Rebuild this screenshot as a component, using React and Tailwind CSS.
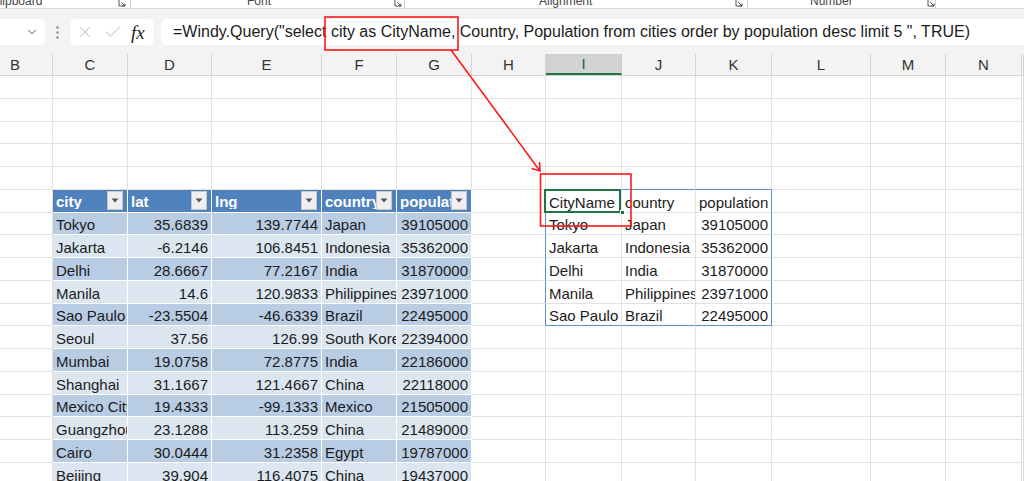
import { X, Check, ChevronDown } from "lucide-react";

const letters = ["B", "C", "D", "E", "F", "G", "H", "I", "J", "K", "L", "M", "N", ""];

const cities = [
  ["Tokyo", "35.6839", "139.7744", "Japan", "39105000"],
  ["Jakarta", "-6.2146", "106.8451", "Indonesia", "35362000"],
  ["Delhi", "28.6667", "77.2167", "India", "31870000"],
  ["Manila", "14.6", "120.9833", "Philippines", "23971000"],
  ["Sao Paulo", "-23.5504", "-46.6339", "Brazil", "22495000"],
  ["Seoul", "37.56", "126.99", "South Korea", "22394000"],
  ["Mumbai", "19.0758", "72.8775", "India", "22186000"],
  ["Shanghai", "31.1667", "121.4667", "China", "22118000"],
  ["Mexico City", "19.4333", "-99.1333", "Mexico", "21505000"],
  ["Guangzhou", "23.1288", "113.259", "China", "21489000"],
  ["Cairo", "30.0444", "31.2358", "Egypt", "19787000"],
  ["Beijing", "39.904", "116.4075", "China", "19437000"],
];

const tableHead = ["city", "lat", "lng", "country", "population"];

const result = [
  ["CityName", "country", "population"],
  ["Tokyo", "Japan", "39105000"],
  ["Jakarta", "Indonesia", "35362000"],
  ["Delhi", "India", "31870000"],
  ["Manila", "Philippines", "23971000"],
  ["Sao Paulo", "Brazil", "22495000"],
];

const GRID =
  "grid grid-cols-[53px_75px_84px_110px_75px_75px_74px_76px_74px_76px_99px_75px_76px_1fr]";

function Launcher() {
  return (
    <svg width="8" height="8" viewBox="0 0 8 8" className="text-[#555]">
      <path d="M1 1v6h6" fill="none" stroke="currentColor" strokeWidth="1" />
      <path d="M3 3l4 4M7 4.5V7H4.5" fill="none" stroke="currentColor" strokeWidth="1" />
    </svg>
  );
}

function FilterButton() {
  return (
    <div className="w-[16px] h-[19px] mr-[4px] shrink-0 bg-[#efefef] border border-[#c6c6c6] flex items-center justify-center">
      <svg width="8" height="5" viewBox="0 0 8 5">
        <path d="M0.5 0.5h7L4 4.5z" fill="#555" />
      </svg>
    </div>
  );
}

function isNum(v) {
  return /^-?[0-9.]+$/.test(v);
}

function Value({ v }) {
  return (
    <div
      className={
        isNum(v)
          ? "w-full h-full flex items-center justify-end pr-[3px] pt-[3px]"
          : "w-full h-full flex items-center pl-[3px] pt-[3px]"
      }
    >
      {v}
    </div>
  );
}

export default function App() {
  const cells = [];
  for (let r = 0; r < 18; r++) {
    for (let c = 0; c < 14; c++) {
      const inLeft = r >= 5 && c >= 1 && c <= 5;
      const inOut = r >= 5 && r <= 10 && c >= 7 && c <= 9;

      let right = "border-r-[#e1e1e1]";
      if (inLeft) right = "border-r-white";
      else if (c === 6 && r >= 5 && r <= 10) right = "border-r-[#5f8fd6]";
      else if (inOut && c === 9) right = "border-r-[#5f8fd6]";

      let bottom = "border-b-[#e1e1e1]";
      if (inLeft) bottom = "border-b-white";
      else if (r === 4 && c >= 7 && c <= 9) bottom = "border-b-[#5f8fd6]";
      else if (inOut && r === 10) bottom = "border-b-[#5f8fd6]";

      let bg = "";
      let content = null;
      let extra = "overflow-hidden";

      if (inLeft && r === 5) {
        bg = "bg-[#4f81bd]";
        content = (
          <div className="flex items-center w-full h-full">
            <span className="flex-1 min-w-0 overflow-hidden pl-[3px] pt-[2px] text-white font-bold">
              {tableHead[c - 1]}
            </span>
            <FilterButton />
          </div>
        );
      } else if (inLeft) {
        const d = r - 6;
        bg = d % 2 === 0 ? "bg-[#b8cce4]" : "bg-[#dce6f1]";
        content = <Value v={cities[d][c - 1]} />;
      } else if (inOut) {
        content = <Value v={result[r - 5][c - 7]} />;
        if (r === 5 && c === 9) extra = "overflow-visible";
        if (r === 5 && c === 7) {
          extra = "overflow-visible relative";
          content = (
            <>
              {content}
              <div className="absolute left-[-2px] top-[-1px] w-[77px] h-[24px] border-2 border-[#217346]" />
              <div className="absolute right-[-4px] bottom-[-3px] w-[5px] h-[5px] bg-[#217346] border border-white" />
            </>
          );
        }
      }

      cells.push(
        <div
          key={r + "-" + c}
          className={`h-[22.75px] border-r border-b whitespace-nowrap ${right} ${bottom} ${bg} ${extra}`}
        >
          {content}
        </div>
      );
    }
  }

  return (
    <div className="relative w-[1024px] h-[481px] overflow-hidden bg-white font-['Liberation_Sans',Arial,sans-serif] text-[#1b1b1b]">
      {/* ribbon group labels, only their lower edge shows */}
      <div className="h-[8px] overflow-hidden bg-white flex items-end text-[12px] leading-none text-[#444] whitespace-nowrap border-b border-[#d9d9d9] box-content">
        <span className="ml-[-9px] w-[127px] shrink-0 mb-[1px]">Clipboard</span>
        <span className="mb-[1px]"><Launcher /></span>
        <span className="ml-[4px] w-px h-[8px] bg-[#d0d0d0]" />
        <span className="ml-[116px] w-[147px] shrink-0 mb-[1px]">Font</span>
        <span className="mb-[1px]"><Launcher /></span>
        <span className="ml-[2px] w-px h-[8px] bg-[#d0d0d0]" />
        <span className="ml-[134px] w-[196px] shrink-0 mb-[1px]">Alignment</span>
        <span className="mb-[1px]"><Launcher /></span>
        <span className="ml-[4px] w-px h-[8px] bg-[#d0d0d0]" />
        <span className="ml-[62px] w-[117px] shrink-0 mb-[1px]">Number</span>
        <span className="mb-[1px]"><Launcher /></span>
        <span className="w-px h-[8px] bg-[#d0d0d0]" />
      </div>

      {/* formula bar */}
      <div className="h-[39px] bg-[#f3f3f3] flex items-start pt-[10px]">
        <div className="w-[45px] h-[26px] bg-white rounded-r-md flex items-center justify-end pr-[6px]">
          <ChevronDown size={14} strokeWidth={1.6} className="text-[#444]" />
        </div>
        <div className="w-[25px] h-[26px] flex items-center justify-center">
          <svg width="3" height="13" viewBox="0 0 3 13">
            <circle cx="1.5" cy="1.5" r="1.2" fill="#8a8a8a" />
            <circle cx="1.5" cy="6.5" r="1.2" fill="#8a8a8a" />
            <circle cx="1.5" cy="11.5" r="1.2" fill="#8a8a8a" />
          </svg>
        </div>
        <div className="w-[84px] h-[26px] bg-white rounded-md flex items-center">
          <X size={18} strokeWidth={1.2} className="ml-[6px] text-[#b4b4b4]" />
          <Check size={20} strokeWidth={1.2} className="ml-[9px] text-[#b4b4b4]" />
          <span className="ml-[8px] font-['Liberation_Serif',serif] italic text-[19px] leading-none text-[#222]">
            fx
          </span>
        </div>
        <div className="ml-[7px] flex-1 h-[26px] bg-white rounded-l-md flex items-center pl-[12px] text-[16px] whitespace-nowrap overflow-hidden text-[#1b1b1b]">
          =Windy.Query("select city as CityName, Country, Population from cities order by population desc limit 5 ", TRUE)
        </div>
      </div>

      {/* column letters */}
      <div className={`${GRID} h-[28px] bg-[#f3f3f3] border-b border-[#d4d4d4]`}>
        {letters.map((l, i) => (
          <div key={i} className="h-[27px] pt-[6px]">
            <div
              className={
                i === 7
                  ? "h-full bg-[#d2d2d2] border-b-2 border-[#217346] border-r border-r-[#c8c8c8] flex items-center justify-center pt-[2px] text-[15px] text-[#215a3a]"
                  : i === 0
                  ? "h-full border-r border-[#d4d4d4] flex items-center pl-[10px] pt-[2px] text-[15px] text-[#333]"
                  : "h-full border-r border-[#d4d4d4] flex items-center justify-center pt-[2px] text-[15px] text-[#333]"
              }
            >
              {l}
            </div>
          </div>
        ))}
      </div>

      {/* sheet */}
      <div className={`${GRID} text-[15px] leading-none`}>{cells}</div>

      {/* annotation: red boxes and arrow */}
      <svg
        className="absolute inset-0 pointer-events-none"
        width="1024"
        height="481"
        viewBox="0 0 1024 481"
      >
        <rect x="325" y="17" width="133" height="33" fill="none" stroke="#ff1a1a" strokeWidth="1.6" />
        <rect x="540.5" y="174" width="90.5" height="52" fill="none" stroke="#ff1a1a" strokeWidth="1.6" />
        <line x1="451" y1="50" x2="540" y2="171" stroke="#ff1a1a" strokeWidth="1.6" />
        <path d="M531.5 168.5L540 171L539.5 162" fill="none" stroke="#ff1a1a" strokeWidth="1.6" />
      </svg>
    </div>
  );
}
